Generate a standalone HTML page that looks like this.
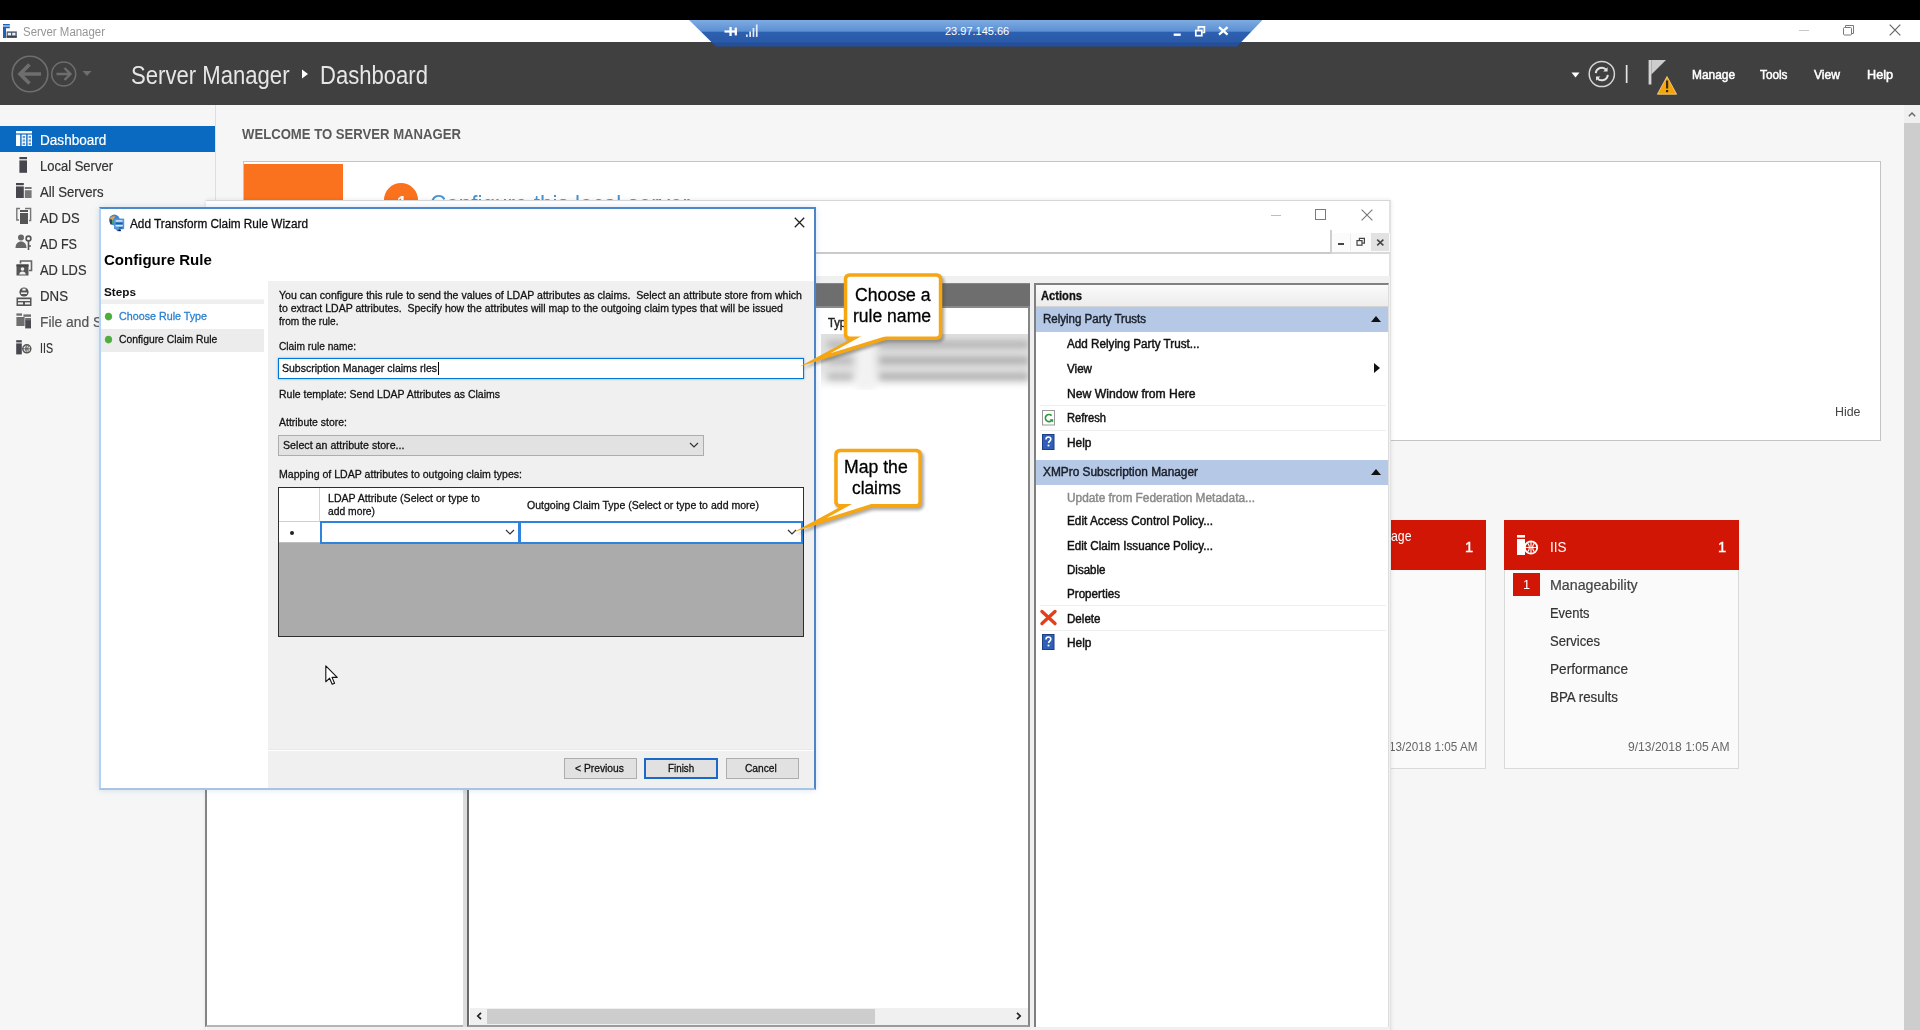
<!DOCTYPE html>
<html lang="en">
<head>
<meta charset="utf-8">
<title>Server Manager</title>
<style>
*{box-sizing:border-box;margin:0;padding:0}
html,body{width:1920px;height:1030px;overflow:hidden;background:#f5f5f5;font-family:"Liberation Sans",sans-serif;color:#222}
.a{position:absolute}
.t{position:absolute;white-space:nowrap;line-height:1;transform-origin:0 50%}
#stage{position:relative;width:1920px;height:1030px;overflow:hidden;background:#f6f6f6}
svg{position:absolute;overflow:visible}
</style>
</head>
<body>
<div id="stage">
<!-- ===== layer 1 : server manager shell ===== -->
<div class="a" style="left:0;top:0;width:1920px;height:20px;background:#000"></div>
<div class="a" style="left:0;top:20px;width:1920px;height:23px;background:#fff"></div>
<div class="a" style="left:0;top:42px;width:1920px;height:63px;background:#404040"></div>
<!-- app icon -->
<svg style="left:3px;top:24px" width="15" height="15" viewBox="0 0 15 15"><path d="M0 0h6.8v1.6H0zM0 2.4h6.8v1.8H3V14H0z" fill="#1c62b8"/><rect x="0" y="1.6" width="6.8" height=".8" fill="#7fa8dc"/><rect x="3.6" y="7.4" width="10.2" height="6.2" fill="#4a5a74"/><rect x="4.8" y="8.8" width="3.2" height="2.6" fill="#e8eef8"/><rect x="9.2" y="8.8" width="3.2" height="2.6" fill="#e8eef8"/><rect x="3.6" y="12.4" width="10.2" height="1.2" fill="#333"/></svg>
<!-- rdp connection bar -->
<svg style="left:680px;top:20px" width="600" height="27" viewBox="0 0 600 27">
<defs><linearGradient id="rdpg" x1="0" y1="0" x2="0" y2="1"><stop offset="0" stop-color="#7eabe2"/><stop offset=".42" stop-color="#5c90d3"/><stop offset=".46" stop-color="#2c60b0"/><stop offset=".82" stop-color="#2a5aa8"/><stop offset=".86" stop-color="#244f9a"/><stop offset="1" stop-color="#244f9a"/></linearGradient></defs>
<polygon points="9,0 582.5,0 557,26.6 36,26.6" fill="url(#rdpg)"/>
<g fill="#fff"><rect x="44.5" y="10.4" width="12.5" height="2.2"/><rect x="49.4" y="7" width="2.3" height="9"/><rect x="54.7" y="7.6" width="2.2" height="7.8"/></g>
<g fill="#e3ecf8"><rect x="66" y="14.5" width="1.7" height="2.4"/><rect x="69.3" y="11.5" width="1.7" height="5.4"/><rect x="72.6" y="8" width="1.7" height="8.9"/><rect x="75.9" y="4.5" width="1.7" height="12.4"/></g>
<rect x="493.7" y="13.5" width="7" height="2.4" fill="#fff"/>
<g fill="none" stroke="#fff" stroke-width="1.7"><rect x="515.8" y="10.5" width="6" height="5.2"/><path d="M518.4 9.6V6.9h6v5.6h-2"/></g>
<path d="M539 7.2l8.6 7.4M547.6 7.2l-8.6 7.4" stroke="#fff" stroke-width="2.3" fill="none"/>
</svg>
<!-- window controls -->
<div class="a" style="left:1799px;top:30px;width:10px;height:1px;background:#c8c8c8"></div>
<svg style="left:1842px;top:23.5px" width="13" height="12" viewBox="0 0 13 12" fill="none" stroke="#7a7a7a" stroke-width="1"><rect x="1.5" y="3.5" width="8" height="7.5" rx="1"/><path d="M3.5 3.5V1.5h8v8h-2"/></svg>
<svg style="left:1889px;top:24px" width="12" height="12" viewBox="0 0 12 12"><path d="M.7 .7l10.6 10.6M11.3 .7L.7 11.3" stroke="#666" stroke-width="1.2" fill="none"/></svg>
<!-- back / forward -->
<svg style="left:10px;top:54px" width="90" height="42" viewBox="0 0 90 42" fill="none" stroke="#6e6e6e">
<circle cx="20" cy="20" r="17.8" stroke-width="1.6"/>
<path d="M31 20H11M19.5 10.5L10 20L19.5 29.5" stroke-width="3.6"/>
<circle cx="53.7" cy="20" r="12" stroke-width="1.5"/>
<path d="M46.5 20H60M54.5 14L60.5 20L54.5 26" stroke-width="2.4"/>
<path d="M72.5 17h9l-4.5 5z" fill="#6e6e6e" stroke="none"/>
</svg>
<!-- breadcrumb arrow -->
<svg style="left:301px;top:69px" width="8" height="10" viewBox="0 0 8 10"><path d="M1 .5L7 5L1 9.5z" fill="#fff"/></svg>
<!-- header right -->
<svg style="left:1565px;top:55px" width="120" height="45" viewBox="0 0 120 45">
<path d="M6.5 17.5h8l-4 5z" fill="#fff"/>
<circle cx="36.8" cy="19" r="12.6" fill="none" stroke="#d6d6d6" stroke-width="1.5"/>
<g fill="none" stroke="#e4e4e4" stroke-width="2"><path d="M30.8 18.2a6 6 0 0 1 10.6-3.3"/><path d="M42.8 19.8a6 6 0 0 1-10.6 3.3"/></g>
<path d="M42.6 12.2v4.4h-4.4zM31 25.8v-4.4h4.4z" fill="#e4e4e4"/>
<rect x="60.8" y="10" width="1.7" height="18" fill="#e4e4e4"/>
<rect x="83.6" y="5" width="2.8" height="24.5" fill="#d4d4d4"/>
<path d="M86.4 5h14.6L86.4 19.5z" fill="#cdcdcd"/>
<path d="M102 21.5L111.6 39.2h-19.2z" fill="#f6a40a" stroke="#fbd68f" stroke-width=".8"/>
<rect x="101" y="25.5" width="2.2" height="8" fill="#3a2a10"/><rect x="101" y="35" width="2.2" height="2.2" fill="#3a2a10"/>
</svg>
<!-- sidebar -->
<div class="a" style="left:215px;top:105px;width:1px;height:925px;background:#dedede"></div>
<div class="a" style="left:0;top:126px;width:215px;height:26px;background:#0a6ac2"></div>
<!-- sidebar icons -->
<svg style="left:14px;top:128px" width="20" height="232" viewBox="0 0 20 232">
<!-- dashboard -->
<g fill="#fff"><rect x="2" y="3" width="16" height="2.4"/><rect x="2" y="6.6" width="4.2" height="11.4"/><rect x="7.6" y="6.6" width="4.6" height="11.4"/><rect x="13.6" y="6.6" width="4.4" height="11.4"/></g>
<g fill="#5d9bd8"><rect x="8.6" y="8" width="2.6" height="2.2"/><rect x="8.6" y="11.4" width="2.6" height="2.2"/><rect x="8.6" y="14.8" width="2.6" height="2.2"/><rect x="14.6" y="8" width="2.4" height="2.2"/><rect x="14.6" y="11.4" width="2.4" height="2.2"/><rect x="14.6" y="14.8" width="2.4" height="2.2"/></g>
<!-- local server -->
<g fill="#46464e"><rect x="5.4" y="29" width="7.6" height="2.2"/><rect x="5.4" y="32.4" width="7.6" height="12.4"/></g>
<!-- all servers -->
<g fill="#46464e"><rect x="2" y="55" width="7.8" height="2.2"/><rect x="2" y="58.4" width="7.8" height="11.6"/></g>
<g fill="#777"><rect x="10.8" y="59" width="6.8" height="2"/><rect x="10.8" y="62.2" width="6.8" height="7.8"/></g>
<!-- AD DS -->
<g fill="#555"><rect x="6" y="82" width="8" height="2"/><rect x="6" y="85" width="8" height="11"/></g>
<g fill="none" stroke="#777" stroke-width="1.4"><path d="M6 80.5H2.8v11.5H5M11 80.5h5.6v12H15"/></g>
<!-- AD FS -->
<g fill="#666"><circle cx="7" cy="109.5" r="3"/><path d="M1.5 120c0-4 2.4-6.4 5.5-6.4s5.5 2.4 5.5 6.4z"/></g>
<g fill="none" stroke="#555" stroke-width="1.6"><circle cx="14.5" cy="110.5" r="2.4"/><path d="M14.5 113v9M14.5 118h2.4"/></g>
<!-- AD LDS -->
<g fill="none" stroke="#666" stroke-width="1.6"><path d="M6.5 135.5V133h11v9.5H15"/></g>
<rect x="2.5" y="136.5" width="12" height="11" fill="#555"/><circle cx="8.5" cy="141" r="1.8" fill="#eee"/><path d="M5.2 146.4c.3-2.2 1.6-3 3.3-3s3 .8 3.3 3z" fill="#eee"/><rect x="2.5" y="136.5" width="12" height="2" fill="#444"/>
<!-- DNS -->
<g fill="#555"><circle cx="10" cy="164" r="4.6"/><rect x="2.5" y="169.5" width="15" height="8.5"/></g>
<g fill="#f0f0f0"><rect x="4" y="171.2" width="12" height="1.8"/><rect x="4" y="174.4" width="5" height="2"/><rect x="11" y="174.4" width="5" height="2"/><rect x="8.4" y="160.6" width="3.2" height="2"/><rect x="7" y="164.4" width="6" height="1.6"/></g>
<!-- File and storage -->
<g fill="#6e6e6e"><rect x="2.4" y="185.4" width="5.6" height="2.3"/><rect x="2.4" y="189" width="8.2" height="9"/><rect x="9.4" y="186.4" width="7.6" height="2.4"/><rect x="11.2" y="190" width="5.8" height="3"/></g>
<g fill="#4a4a52"><rect x="11.2" y="192.4" width="5.8" height="8"/></g>
<!-- IIS -->
<g fill="#46464e"><rect x="2.2" y="212.2" width="5.6" height="2.2"/><rect x="2.2" y="215.4" width="5.6" height="11"/></g>
<circle cx="12.8" cy="220.8" r="4" fill="none" stroke="#555" stroke-width="1.5"/><path d="M8.8 220.8h8M12.8 216.8v8M10.6 218c1.6 1.8 1.6 3.8 0 5.6M15 218c-1.6 1.8-1.6 3.8 0 5.6" stroke="#555" stroke-width=".9" fill="none"/>
</svg>
<!-- welcome panel -->
<div class="a" style="left:243px;top:161px;width:1638px;height:280px;background:#fff;border:1px solid #c4c4c4"></div>
<div class="a" style="left:244px;top:164px;width:99px;height:60px;background:#fa721d"></div>
<div class="a" style="left:384px;top:183px;width:34px;height:34px;border-radius:50%;background:#fa721d"></div>
<!-- tiles -->
<div class="a" style="left:1380px;top:520px;width:106px;height:249px;background:#fafafa;border:1px solid #d9d9d9"></div>
<div class="a" style="left:1380px;top:520px;width:106px;height:50px;background:#d11606"></div>
<div class="a" style="left:1504px;top:520px;width:235px;height:249px;background:#fafafa;border:1px solid #d9d9d9"></div>
<div class="a" style="left:1504px;top:520px;width:235px;height:50px;background:#d11606"></div>
<div class="a" style="left:1513px;top:573px;width:27px;height:23px;background:#d11606"></div>
<svg style="left:1517px;top:535px" width="22" height="21" viewBox="0 0 22 21"><g fill="#fff"><rect x="0" y="0" width="8" height="2.6"/><rect x="0" y="4" width="8" height="16"/></g><circle cx="14" cy="12.5" r="6.2" fill="#d11606" stroke="#fff" stroke-width="1.8"/><path d="M8 12.5h12M14 6.5v12M10.6 8.2c2.2 2.6 2.2 6 0 8.6M17.4 8.2c-2.2 2.6-2.2 6 0 8.6" stroke="#fff" stroke-width="1.1" fill="none"/></svg>
<!-- main scrollbar -->
<div class="a" style="left:1904px;top:105px;width:16px;height:925px;background:#f0f0f0"></div>
<div class="a" style="left:1904px;top:123px;width:16px;height:907px;background:#cdcdcd"></div>
<svg style="left:1908px;top:112px" width="8" height="5" viewBox="0 0 8 5"><path d="M.8 4.2L4 1l3.2 3.2" stroke="#666" stroke-width="1.4" fill="none"/></svg>

<div class="t" style="left:22.5px;top:25.9px;font-size:12.5px;color:#959595;transform:scaleX(0.9149);">Server Manager</div>
<div class="t" style="left:945.0px;top:26.1px;font-size:11px;color:#fff;">23.97.145.66</div>
<div class="t" style="left:131.0px;top:63.3px;font-size:25px;color:#e6e6e6;transform:scaleX(0.8842);">Server Manager</div>
<div class="t" style="left:319.5px;top:63.3px;font-size:25px;color:#e6e6e6;transform:scaleX(0.8830);">Dashboard</div>
<div class="t" style="left:1692.0px;top:68.6px;font-size:12px;color:#fff;transform:scaleX(0.9914);-webkit-text-stroke:.5px #fff;">Manage</div>
<div class="t" style="left:1760.0px;top:68.6px;font-size:12px;color:#fff;transform:scaleX(0.9816);-webkit-text-stroke:.5px #fff;">Tools</div>
<div class="t" style="left:1814.0px;top:68.6px;font-size:12px;color:#fff;transform:scaleX(1.0079);-webkit-text-stroke:.5px #fff;">View</div>
<div class="t" style="left:1866.5px;top:68.6px;font-size:12px;color:#fff;transform:scaleX(1.0532);-webkit-text-stroke:.5px #fff;">Help</div>
<div class="t" style="left:40.0px;top:132.7px;font-size:14px;color:#fff;transform:scaleX(0.9693);-webkit-text-stroke:.2px;">Dashboard</div>
<div class="t" style="left:40.0px;top:159.4px;font-size:14px;color:#333;transform:scaleX(0.9288);-webkit-text-stroke:.2px;">Local Server</div>
<div class="t" style="left:40.0px;top:185.2px;font-size:14px;color:#333;transform:scaleX(0.9381);-webkit-text-stroke:.2px;">All Servers</div>
<div class="t" style="left:40.0px;top:210.5px;font-size:14px;color:#333;transform:scaleX(0.9253);-webkit-text-stroke:.2px;">AD DS</div>
<div class="t" style="left:40.0px;top:236.5px;font-size:14px;color:#333;transform:scaleX(0.8973);-webkit-text-stroke:.2px;">AD FS</div>
<div class="t" style="left:40.0px;top:262.5px;font-size:14px;color:#333;transform:scaleX(0.9194);-webkit-text-stroke:.2px;">AD LDS</div>
<div class="t" style="left:40.0px;top:288.5px;font-size:14px;color:#333;transform:scaleX(0.9471);-webkit-text-stroke:.2px;">DNS</div>
<div class="t" style="left:40.0px;top:314.5px;font-size:14px;color:#555;transform:scaleX(0.9850);-webkit-text-stroke:.2px;">File and Storage Services</div>
<div class="t" style="left:40.0px;top:340.5px;font-size:14px;color:#333;transform:scaleX(0.7591);-webkit-text-stroke:.2px;">IIS</div>
<div class="t" style="left:242.0px;top:126.7px;font-size:14px;color:#595959;font-weight:700;transform:scaleX(0.9374);">WELCOME TO SERVER MANAGER</div>
<div class="t" style="left:396.5px;top:193.7px;font-size:18px;color:#fff;font-weight:700;transform:scaleX(0.9850);">1</div>
<div class="t" style="left:430.0px;top:191.9px;font-size:24px;color:#4595d6;transform:scaleX(0.9371);">Configure this local server</div>
<div class="t" style="left:1834.5px;top:405.6px;font-size:12px;color:#444;transform:scaleX(1.0329);">Hide</div>
<div class="t" style="left:1391.0px;top:528.2px;font-size:15px;color:#fff;transform:scaleX(0.8190);">age</div>
<div class="t" style="left:1465.0px;top:539.2px;font-size:15px;color:#fff;transform:scaleX(0.9850);-webkit-text-stroke:.4px #fff;">1</div>
<div class="t" style="left:1388.5px;top:741.1px;font-size:12px;color:#666;transform:scaleX(0.9752);">13/2018 1:05 AM</div>
<div class="t" style="left:1550.0px;top:539.2px;font-size:15px;color:#fff;transform:scaleX(0.8995);">IIS</div>
<div class="t" style="left:1717.5px;top:539.2px;font-size:15px;color:#fff;transform:scaleX(0.9850);-webkit-text-stroke:.4px #fff;">1</div>
<div class="t" style="left:1523.0px;top:578.1px;font-size:13px;color:#fff;transform:scaleX(0.9850);">1</div>
<div class="t" style="left:1550.0px;top:577.9px;font-size:14px;color:#444;transform:scaleX(1.0152);-webkit-text-stroke:.2px;">Manageability</div>
<div class="t" style="left:1550.0px;top:606.1px;font-size:14px;color:#333;transform:scaleX(0.9226);-webkit-text-stroke:.2px;">Events</div>
<div class="t" style="left:1550.0px;top:634.2px;font-size:14px;color:#333;transform:scaleX(0.9313);-webkit-text-stroke:.2px;">Services</div>
<div class="t" style="left:1550.0px;top:662.0px;font-size:14px;color:#333;transform:scaleX(0.9731);-webkit-text-stroke:.2px;">Performance</div>
<div class="t" style="left:1550.0px;top:690.1px;font-size:14px;color:#333;transform:scaleX(0.9533);-webkit-text-stroke:.2px;">BPA results</div>
<div class="t" style="left:1628.0px;top:741.1px;font-size:12px;color:#666;transform:scaleX(1.0074);">9/13/2018 1:05 AM</div>
<!-- ===== layer 2 : AD FS mmc window ===== -->
<div class="a" style="left:206px;top:200px;width:1185px;height:840px;background:#fff;border-top:1px solid #d6d6d6;border-right:2px solid #e2e2e2;box-shadow:0 0 4px rgba(0,0,0,.10)"></div>
<!-- caption buttons -->
<div class="a" style="left:1271px;top:215px;width:10px;height:1px;background:#bdbdbd"></div>
<div class="a" style="left:1315px;top:209px;width:11px;height:11px;border:1px solid #7a7a7a"></div>
<svg style="left:1361px;top:209px" width="12" height="12" viewBox="0 0 12 12"><path d="M.6 .6l10.8 10.8M11.4 .6L.6 11.4" stroke="#777" stroke-width="1.1" fill="none"/></svg>
<!-- menu / toolbar lines -->
<div class="a" style="left:207px;top:252px;width:1125px;height:2px;background:#cbc9c9"></div>
<div class="a" style="left:1330px;top:230px;width:2px;height:24px;background:#cfcfcf"></div>
<div class="a" style="left:1332px;top:233px;width:58px;height:19px;background:#fbfbfb"></div>
<div class="a" style="left:1332px;top:252px;width:58px;height:2px;background:#d9d9d9"></div>
<div class="a" style="left:1350px;top:234px;width:1px;height:17px;background:#ececec"></div>
<div class="a" style="left:1371px;top:233px;width:18px;height:18px;background:#e2e2e2"></div>
<div class="a" style="left:1338px;top:243px;width:6px;height:2px;background:#444"></div>
<svg style="left:1356px;top:237px" width="10" height="10" viewBox="0 0 10 10" fill="none" stroke="#444" stroke-width="1.2"><rect x="1" y="3.6" width="5" height="4.6"/><path d="M3.4 3.4V1.4h5v4.8H6.2"/></svg>
<svg style="left:1376px;top:238px" width="9" height="9" viewBox="0 0 9 9"><path d="M1.2 1.6l6.2 5.8M7.4 1.6L1.2 7.4" stroke="#444" stroke-width="1.5" fill="none"/></svg>
<div class="a" style="left:207px;top:276px;width:1183px;height:764px;background:#f0f0f0"></div>
<!-- left tree pane -->
<div class="a" style="left:205px;top:283px;width:258px;height:744px;background:#fff;border-left:2px solid #858585;border-top:2px solid #808080;border-bottom:2px solid #b5b5b5"></div>
<div class="a" style="left:463px;top:283px;width:4px;height:744px;background:#dcdcdc"></div>
<!-- middle pane -->
<div class="a" style="left:467px;top:283px;width:563px;height:744px;background:#fff;border:2px solid #858585;border-left-color:#6a6a6a;border-bottom-color:#9a9a9a"></div>
<div class="a" style="left:469px;top:284px;width:561px;height:22px;background:#6e6e6e"></div>
<div class="a" style="left:469px;top:306px;width:559px;height:2px;background:#8a8a8a"></div>
<!-- blurred rows -->
<div class="a" style="left:821px;top:334px;width:207px;height:56px;overflow:hidden;background:linear-gradient(#e0e0e0,#e4e4e4 62%,#fff)">
<div class="a" style="left:0;top:0;width:207px;height:56px;filter:blur(3.5px)">
<div class="a" style="left:6px;top:7px;width:26px;height:7px;background:#b4b4b4"></div>
<div class="a" style="left:36px;top:0;width:18px;height:56px;background:#f2f2f2"></div>
<div class="a" style="left:58px;top:7px;width:150px;height:7px;background:#b0b0b0"></div>
<div class="a" style="left:6px;top:23px;width:26px;height:7px;background:#b4b4b4"></div>
<div class="a" style="left:58px;top:23px;width:150px;height:7px;background:#a8a8a8"></div>
<div class="a" style="left:6px;top:39px;width:26px;height:7px;background:#b4b4b4"></div>
<div class="a" style="left:58px;top:39px;width:150px;height:7px;background:#a8a8a8"></div>
</div></div>
<!-- h scrollbar -->
<div class="a" style="left:470px;top:1008px;width:558px;height:17px;background:#f0f0f0"></div>
<div class="a" style="left:487px;top:1009px;width:388px;height:15px;background:#cdcdcd"></div>
<svg style="left:476px;top:1012px" width="7" height="8" viewBox="0 0 7 8"><path d="M5 .8L1.8 4 5 7.2" stroke="#222" stroke-width="1.7" fill="none"/></svg>
<svg style="left:1015px;top:1012px" width="7" height="8" viewBox="0 0 7 8"><path d="M2 .8L5.2 4 2 7.2" stroke="#222" stroke-width="1.7" fill="none"/></svg>
<!-- actions pane -->
<div class="a" style="left:1034px;top:283px;width:355px;height:744px;background:#fff;border-left:2px solid #808080;border-top:2px solid #808080;border-right:1px solid #dcdcdc"></div>
<div class="a" style="left:1036px;top:285px;width:352px;height:22px;background:linear-gradient(#fafafa,#ececec);border-bottom:1px solid #d5d5d5"></div>
<div class="a" style="left:1036px;top:307px;width:352px;height:25px;background:#b5c9e6"></div>
<div class="a" style="left:1036px;top:460px;width:352px;height:25px;background:#b5c9e6"></div>
<svg style="left:1371px;top:316px" width="10" height="6" viewBox="0 0 10 6"><path d="M0 6L5 0l5 6z" fill="#111"/></svg>
<svg style="left:1371px;top:469px" width="10" height="6" viewBox="0 0 10 6"><path d="M0 6L5 0l5 6z" fill="#111"/></svg>
<svg style="left:1374px;top:363px" width="6" height="10" viewBox="0 0 6 10"><path d="M0 0l6 5-6 5z" fill="#111"/></svg>
<!-- separators -->
<div class="a" style="left:1040px;top:405px;width:346px;height:1px;background:#eeeeee"></div>
<div class="a" style="left:1040px;top:430px;width:346px;height:1px;background:#eeeeee"></div>
<div class="a" style="left:1040px;top:605px;width:346px;height:1px;background:#eeeeee"></div>
<div class="a" style="left:1040px;top:630px;width:346px;height:1px;background:#eeeeee"></div>
<!-- refresh icon -->
<svg style="left:1042px;top:410px" width="14" height="16" viewBox="0 0 14 16"><rect x=".5" y=".5" width="12" height="14.5" fill="#fff" stroke="#9a9a9a"/><path d="M9.6 5.6A3.6 3.6 0 1 0 10 10" fill="none" stroke="#2a9a3a" stroke-width="1.6"/><path d="M7.6 9.2h3.6v3.4z" fill="#2a9a3a"/></svg>
<!-- help icons -->
<svg style="left:1042px;top:434px" width="13" height="16" viewBox="0 0 13 16"><rect x=".5" y=".5" width="11.5" height="15" fill="#2f5fb8" stroke="#1d3f86"/><path d="M4 5.4c0-1.6 1-2.4 2.4-2.4s2.4.9 2.4 2.2c0 1.8-2.2 1.9-2.2 3.9" fill="none" stroke="#fff" stroke-width="1.6"/><rect x="5.6" y="10.6" width="1.8" height="1.8" fill="#fff"/></svg>
<svg style="left:1042px;top:634px" width="13" height="16" viewBox="0 0 13 16"><rect x=".5" y=".5" width="11.5" height="15" fill="#2f5fb8" stroke="#1d3f86"/><path d="M4 5.4c0-1.6 1-2.4 2.4-2.4s2.4.9 2.4 2.2c0 1.8-2.2 1.9-2.2 3.9" fill="none" stroke="#fff" stroke-width="1.6"/><rect x="5.6" y="10.6" width="1.8" height="1.8" fill="#fff"/></svg>
<!-- delete icon -->
<svg style="left:1040px;top:609px" width="17" height="17" viewBox="0 0 17 17"><path d="M2 2.5l13 12M15 2.5l-13 12" stroke="#e2401c" stroke-width="3.4" stroke-linecap="round" fill="none"/></svg>

<div class="t" style="left:827.5px;top:317.4px;font-size:12px;color:#222;transform:scaleX(0.9305);-webkit-text-stroke:.45px;">Typ</div>
<div class="t" style="left:1041.0px;top:289.8px;font-size:12px;color:#111;font-weight:700;transform:scaleX(0.9315);-webkit-text-stroke:.3px;">Actions</div>
<div class="t" style="left:1043.0px;top:313.1px;font-size:12px;color:#1a1f2a;transform:scaleX(0.9593);-webkit-text-stroke:.45px;">Relying Party Trusts</div>
<div class="t" style="left:1066.6px;top:338.4px;font-size:12px;color:#111;transform:scaleX(0.9738);-webkit-text-stroke:.45px;">Add Relying Party Trust...</div>
<div class="t" style="left:1066.6px;top:363.2px;font-size:12px;color:#111;transform:scaleX(0.9691);-webkit-text-stroke:.45px;">View</div>
<div class="t" style="left:1066.6px;top:387.6px;font-size:12px;color:#111;transform:scaleX(1.0142);-webkit-text-stroke:.45px;">New Window from Here</div>
<div class="t" style="left:1066.6px;top:412.1px;font-size:12px;color:#111;transform:scaleX(0.9279);-webkit-text-stroke:.45px;">Refresh</div>
<div class="t" style="left:1066.6px;top:437.2px;font-size:12px;color:#111;transform:scaleX(0.9924);-webkit-text-stroke:.45px;">Help</div>
<div class="t" style="left:1043.0px;top:465.9px;font-size:12px;color:#1a1f2a;transform:scaleX(0.9888);-webkit-text-stroke:.45px;">XMPro Subscription Manager</div>
<div class="t" style="left:1066.6px;top:491.5px;font-size:12px;color:#8a8a8a;transform:scaleX(0.9889);-webkit-text-stroke:.45px;">Update from Federation Metadata...</div>
<div class="t" style="left:1066.6px;top:515.4px;font-size:12px;color:#111;transform:scaleX(0.9832);-webkit-text-stroke:.45px;">Edit Access Control Policy...</div>
<div class="t" style="left:1066.6px;top:539.6px;font-size:12px;color:#111;transform:scaleX(0.9701);-webkit-text-stroke:.45px;">Edit Claim Issuance Policy...</div>
<div class="t" style="left:1066.6px;top:563.7px;font-size:12px;color:#111;transform:scaleX(0.9617);-webkit-text-stroke:.45px;">Disable</div>
<div class="t" style="left:1066.6px;top:587.6px;font-size:12px;color:#111;transform:scaleX(0.9689);-webkit-text-stroke:.45px;">Properties</div>
<div class="t" style="left:1066.6px;top:612.7px;font-size:12px;color:#111;transform:scaleX(0.9658);-webkit-text-stroke:.45px;">Delete</div>
<div class="t" style="left:1066.6px;top:637.2px;font-size:12px;color:#111;transform:scaleX(0.9924);-webkit-text-stroke:.45px;">Help</div>
<!-- ===== layer 3 : wizard dialog ===== -->
<div class="a" style="left:99px;top:207px;width:717px;height:583px;background:#fff;border-style:solid;border-width:2px;border-color:#4c88cc #4d84c6 #a9c3e4 #b3d2f5;box-shadow:0 0 6px rgba(80,130,190,.22)"></div>
<div class="a" style="left:268px;top:281px;width:546px;height:507px;background:#f0f0f0"></div>
<!-- wizard icon -->
<svg style="left:108px;top:214px" width="18" height="18" viewBox="0 0 18 18"><circle cx="6.4" cy="6" r="5.4" fill="#3d86c8"/><path d="M2 4.4c1.4-2 3.6-2.6 5.4-1.6-.6 1.4-2 1.6-2.2 3-.2 1.2-1.8.8-3.2-1.4z" fill="#eda04a"/><circle cx="5.4" cy="7.4" r="1.5" fill="#3fae49"/><rect x="2.2" y="5.4" width="1.6" height="5" fill="#2a3a4a"/><rect x="6" y="4.6" width="10.2" height="10.6" rx="1" fill="#5596d8"/><rect x="7.6" y="6.2" width="7" height="1.5" fill="#dbe9f7"/><rect x="7.6" y="8.6" width="7" height="1.5" fill="#1d5aa8"/><rect x="7.6" y="11" width="7" height="1.5" fill="#dbe9f7"/><rect x="11" y="13.2" width="3.6" height="1.4" fill="#1d5aa8"/><path d="M7.5 15.2h5l.6 2h-3.4z" fill="#2c6cb4"/><rect x="10.6" y="15.6" width="2" height="1.4" fill="#111"/></svg>
<!-- close x -->
<svg style="left:794px;top:217px" width="11" height="11" viewBox="0 0 11 11"><path d="M.8 .8l9.4 9.4M10.2 .8L.8 10.2" stroke="#222" stroke-width="1.3" fill="none"/></svg>
<!-- steps -->
<div class="a" style="left:101px;top:299px;width:163px;height:5px;background:linear-gradient(#f6f6f6,#eeeeee 40%,#efefef)"></div>
<div class="a" style="left:101px;top:329px;width:163px;height:23px;background:#ececec"></div>
<svg style="left:104px;top:312px" width="10" height="33" viewBox="0 0 10 33"><ellipse cx="4.5" cy="4.6" rx="3.6" ry="3.8" fill="#4fae3e"/><ellipse cx="4.5" cy="27.6" rx="3.6" ry="3.8" fill="#4fae3e"/></svg>
<!-- input -->
<div class="a" style="left:278px;top:358px;width:526px;height:21px;background:#fff;border:1px solid #0078d7;box-shadow:0 0 2px rgba(0,120,215,.6)"></div>
<div class="a" style="left:438px;top:362px;width:1px;height:13px;background:#000"></div>
<!-- select -->
<div class="a" style="left:278px;top:435px;width:426px;height:21px;background:#e2e2e2;border:1px solid #adadad"></div>
<svg style="left:689px;top:442px" width="10" height="7" viewBox="0 0 10 7"><path d="M1 1l4 4 4-4" stroke="#333" stroke-width="1.2" fill="none"/></svg>
<!-- grid -->
<div class="a" style="left:278px;top:487px;width:526px;height:150px;background:#ababab;border:1px solid #2e2e2e"></div>
<div class="a" style="left:279px;top:488px;width:524px;height:33px;background:#fff"></div>
<div class="a" style="left:279px;top:521px;width:41px;height:22px;background:#fff;border-top:1px solid #cfcfcf;border-bottom:1px solid #bdbdbd"></div>
<div class="a" style="left:319px;top:488px;width:1px;height:33px;background:#d4d4d4"></div>
<div class="a" style="left:320px;top:521px;width:200px;height:23px;background:#fff;border:2px solid #2e83dc"></div>
<div class="a" style="left:519px;top:521px;width:284px;height:23px;background:#fff;border:2px solid #2e83dc"></div>
<svg style="left:505px;top:529px" width="10" height="7" viewBox="0 0 10 7"><path d="M1 1l4 4 4-4" stroke="#333" stroke-width="1.2" fill="none"/></svg>
<svg style="left:787px;top:529px" width="10" height="7" viewBox="0 0 10 7"><path d="M1 1l4 4 4-4" stroke="#333" stroke-width="1.2" fill="none"/></svg>
<div class="a" style="left:290px;top:531px;width:4px;height:4px;border-radius:50%;background:#222"></div>
<!-- footer line -->
<div class="a" style="left:268px;top:749px;width:546px;height:1px;background:#e8e8e8"></div>
<div class="a" style="left:268px;top:750px;width:546px;height:1px;background:#fff"></div>
<!-- buttons -->
<div class="a" style="left:564px;top:758px;width:73px;height:21px;background:#e1e1e1;border:1px solid #adadad"></div>
<div class="a" style="left:644px;top:758px;width:74px;height:21px;background:#e1e1e1;border:2px solid #1a69c8"></div>
<div class="a" style="left:726px;top:758px;width:73px;height:21px;background:#e1e1e1;border:1px solid #adadad"></div>

<div class="t" style="left:130.0px;top:218.3px;font-size:12px;color:#111;transform:scaleX(0.9813);-webkit-text-stroke:.3px;">Add Transform Claim Rule Wizard</div>
<div class="t" style="left:104.0px;top:252.1px;font-size:15.5px;color:#000;font-weight:700;transform:scaleX(0.9704);">Configure Rule</div>
<div class="t" style="left:104.3px;top:287.0px;font-size:11.5px;color:#111;font-weight:700;transform:scaleX(1.0214);">Steps</div>
<div class="t" style="left:119.3px;top:310.8px;font-size:11.5px;color:#2a80d2;transform:scaleX(0.9321);-webkit-text-stroke:.3px;">Choose Rule Type</div>
<div class="t" style="left:119.3px;top:333.7px;font-size:11.5px;color:#111;transform:scaleX(0.8994);-webkit-text-stroke:.3px;">Configure Claim Rule</div>
<div class="t" style="left:278.5px;top:289.6px;font-size:11.5px;color:#111;transform:scaleX(0.9193);-webkit-text-stroke:.3px;">You can configure this rule to send the values of LDAP attributes as claims. &nbsp;Select an attribute store from which</div>
<div class="t" style="left:278.5px;top:303.0px;font-size:11.5px;color:#111;transform:scaleX(0.9150);-webkit-text-stroke:.3px;">to extract LDAP attributes. &nbsp;Specify how the attributes will map to the outgoing claim types that will be issued</div>
<div class="t" style="left:278.5px;top:316.2px;font-size:11.5px;color:#111;transform:scaleX(0.8782);-webkit-text-stroke:.3px;">from the rule.</div>
<div class="t" style="left:278.5px;top:340.6px;font-size:11.5px;color:#111;transform:scaleX(0.8859);-webkit-text-stroke:.3px;">Claim rule name:</div>
<div class="t" style="left:282.0px;top:362.9px;font-size:11.5px;color:#111;transform:scaleX(0.9151);-webkit-text-stroke:.3px;">Subscription Manager claims rles</div>
<div class="t" style="left:278.5px;top:388.7px;font-size:11.5px;color:#111;transform:scaleX(0.9130);-webkit-text-stroke:.3px;">Rule template: Send LDAP Attributes as Claims</div>
<div class="t" style="left:278.5px;top:417.2px;font-size:11.5px;color:#111;transform:scaleX(0.9091);-webkit-text-stroke:.3px;">Attribute store:</div>
<div class="t" style="left:282.5px;top:440.4px;font-size:11.5px;color:#111;transform:scaleX(0.9271);-webkit-text-stroke:.3px;">Select an attribute store...</div>
<div class="t" style="left:278.5px;top:468.8px;font-size:11.5px;color:#111;transform:scaleX(0.9189);-webkit-text-stroke:.3px;">Mapping of LDAP attributes to outgoing claim types:</div>
<div class="t" style="left:327.5px;top:493.1px;font-size:11.5px;color:#111;transform:scaleX(0.9192);-webkit-text-stroke:.3px;">LDAP Attribute (Select or type to</div>
<div class="t" style="left:327.5px;top:506.1px;font-size:11.5px;color:#111;transform:scaleX(0.8966);-webkit-text-stroke:.3px;">add more)</div>
<div class="t" style="left:526.8px;top:500.1px;font-size:11.5px;color:#111;transform:scaleX(0.9173);-webkit-text-stroke:.3px;">Outgoing Claim Type (Select or type to add more)</div>
<div class="t" style="left:574.7px;top:763.1px;font-size:11.5px;color:#111;transform:scaleX(0.8965);-webkit-text-stroke:.3px;">&lt; Previous</div>
<div class="t" style="left:668.4px;top:763.1px;font-size:11.5px;color:#111;transform:scaleX(0.8538);-webkit-text-stroke:.3px;">Finish</div>
<div class="t" style="left:745.0px;top:763.1px;font-size:11.5px;color:#111;transform:scaleX(0.8880);-webkit-text-stroke:.3px;">Cancel</div>
<!-- ===== layer 4 : callouts + cursor ===== -->
<svg style="left:780px;top:265px" width="180" height="280" viewBox="780 265 180 280">
<defs><filter id="cs" x="-20%" y="-20%" width="140%" height="140%"><feGaussianBlur stdDeviation="1.8"/></filter></defs>
<g opacity=".45" filter="url(#cs)" transform="translate(2,2.5)" fill="#444"><rect x="843.8" y="273.2" width="98.5" height="66.7" rx="5.5"/><polygon points="848.9,339.5 799.7,366.4 885.9,339.5"/><rect x="834.2" y="448.7" width="87.7" height="59" rx="5.5"/><polygon points="838.9,507.5 793.9,532 871.3,507.5"/></g>
<g fill="#f5a612"><rect x="843.8" y="273.2" width="98.5" height="66.7" rx="5.5"/><polygon points="848.9,339.9 799.7,366.4 885.9,339.9 885.9,336 848.9,336"/><rect x="834.2" y="448.7" width="87.7" height="59" rx="5.5"/><polygon points="838.9,507.7 793.9,532 871.3,507.7 871.3,504 838.9,504"/></g>
<g fill="#fff"><rect x="847.3" y="276.7" width="91.5" height="59.7" rx="2.6"/><polygon points="863.5,335 830.4,353.3 889.6,335"/><rect x="837.8" y="452.3" width="80.5" height="51.7" rx="2.6"/><polygon points="853.8,503 826.2,518.2 874.5,503"/></g>
</svg>
<!-- mouse cursor -->
<svg style="left:325px;top:665px" width="14" height="21" viewBox="0 0 14 21"><path d="M.8 .8v16l3.8-3.6 2.6 6 2.4-1-2.6-5.8h5.2z" fill="#fff" stroke="#111" stroke-width="1.1" stroke-linejoin="round"/></svg>

<div class="t" style="left:854.6px;top:286.2px;font-size:18px;color:#000;transform:scaleX(0.9797);-webkit-text-stroke:.3px;">Choose a</div>
<div class="t" style="left:853.4px;top:307.4px;font-size:18px;color:#000;transform:scaleX(0.9744);-webkit-text-stroke:.3px;">rule name</div>
<div class="t" style="left:844.3px;top:457.7px;font-size:18px;color:#000;transform:scaleX(0.9793);-webkit-text-stroke:.3px;">Map the</div>
<div class="t" style="left:852.3px;top:479.4px;font-size:18px;color:#000;transform:scaleX(0.9605);-webkit-text-stroke:.3px;">claims</div>

</div>
</body>
</html>
